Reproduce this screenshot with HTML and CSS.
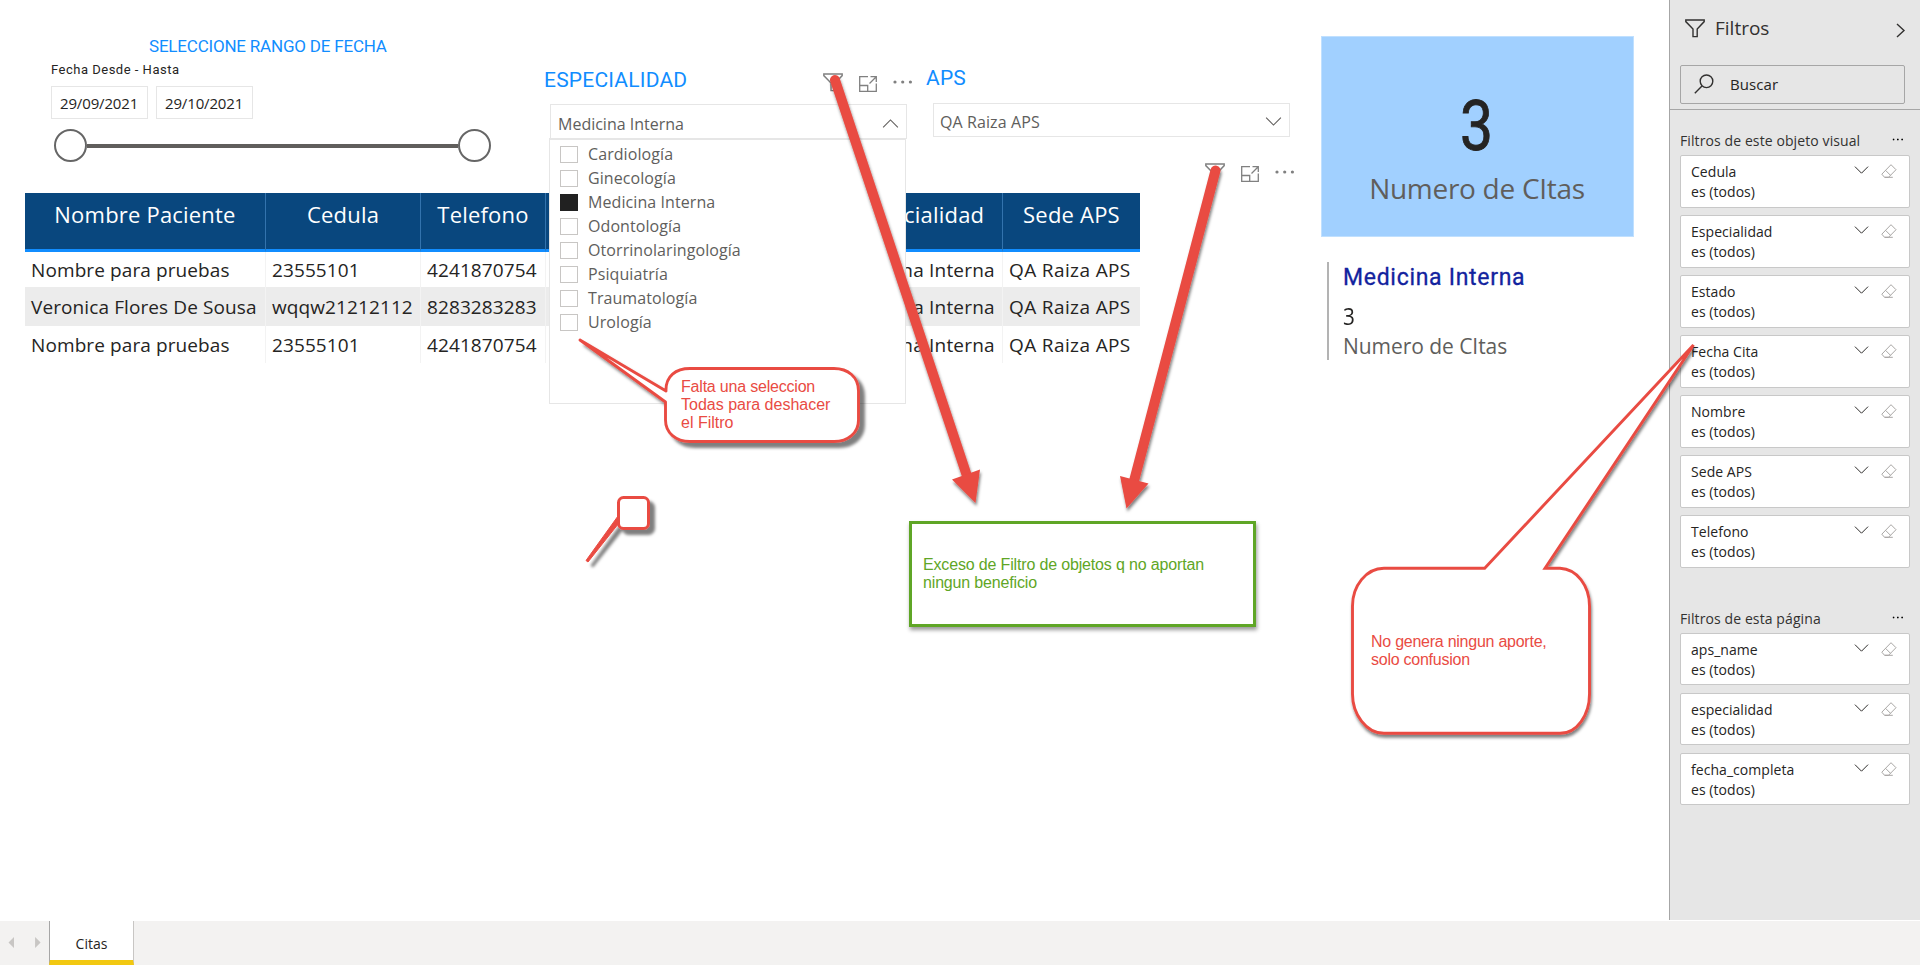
FILE: index.html
```html
<!DOCTYPE html>
<html lang="es">
<head>
<meta charset="utf-8">
<title>Citas</title>
<link rel="stylesheet" href="styles.css">
</head>
<body>
<svg class="defs" width="0" height="0">
  <symbol id="funnel" viewBox="0 0 20 19"><path d="M.8 1h18.4v1.6l-7 7.4v7.6H8V10L.8 2.6z" fill="none" stroke="currentColor" stroke-width="1.4"/></symbol>
  <symbol id="focus" viewBox="0 0 18 16"><path d="M9 .7H.7v14.6h16.6V7.500M.7 9.500h8v5.800M10.500 7.500l6-6M11.500.7h5.800v5.300" fill="none" stroke="currentColor" stroke-width="1.300"/></symbol>
  <symbol id="dots" viewBox="0 0 20 4"><circle cx="2" cy="2" r="1.600"/><circle cx="9.700" cy="2" r="1.600"/><circle cx="17.400" cy="2" r="1.600"/></symbol>
  <symbol id="down" viewBox="0 0 18 10"><path d="M.8.8 9 9 17.200.8" fill="none" stroke="currentColor" stroke-width="1.200"/></symbol>
  <symbol id="eraser" viewBox="0 0 16 14"><path d="M10 .7l5 5-7.500 7.600H3.600L.8 10.200zM4.500 6.300l5 5M3.600 13.300h8.200" fill="none" stroke="currentColor" stroke-width="1"/></symbol>
</svg>
<div class="app">
  <main class="report">
    <section class="left">
      <div class="slicers">
        <div class="date-slicer">
          <h2 class="date-title">SELECCIONE RANGO DE FECHA</h2>
          <div class="date-label">Fecha Desde - Hasta</div>
          <div class="dates"><span class="date"><span>29/09/2021</span></span><span class="date"><span>29/10/2021</span></span></div>
          <div class="range"><i class="knob"></i><i class="track"></i><i class="knob"></i></div>
        </div>
        <div class="slicer esp">
          <div class="slicer-head">
            <h2>ESPECIALIDAD</h2>
            <div class="tools"><svg class="t-funnel"><use href="#funnel"/></svg><svg class="t-focus"><use href="#focus"/></svg><svg class="t-dots"><use href="#dots"/></svg></div>
          </div>
          <div class="select"><span>Medicina Interna</span><svg class="chev up"><use href="#down"/></svg>
            <ul class="menu">
              <li><i></i><span>Cardiología</span></li>
              <li><i></i><span>Ginecología</span></li>
              <li><i class="on"></i><span>Medicina Interna</span></li>
              <li><i></i><span>Odontología</span></li>
              <li><i></i><span>Otorrinolaringología</span></li>
              <li><i></i><span>Psiquiatría</span></li>
              <li><i></i><span>Traumatología</span></li>
              <li><i></i><span>Urología</span></li>
            </ul>
          </div>
        </div>
        <div class="slicer aps">
          <div class="slicer-head"><h2>APS</h2></div>
          <div class="select"><span>QA Raiza APS</span><svg class="chev"><use href="#down"/></svg></div>
          <div class="tools"><svg class="t-funnel"><use href="#funnel"/></svg><svg class="t-focus"><use href="#focus"/></svg><svg class="t-dots"><use href="#dots"/></svg></div>
        </div>
      </div>
      <table class="grid">
        <colgroup><col class="c1"><col class="c2"><col class="c3"><col class="c4"><col class="c5"><col class="c6"></colgroup>
        <thead><tr><th>Nombre Paciente</th><th>Cedula</th><th>Telefono</th><th></th><th>Especialidad</th><th>Sede APS</th></tr></thead>
        <tbody>
          <tr><td>Nombre para pruebas</td><td>23555101</td><td>4241870754</td><td></td><td>Medicina Interna</td><td>QA Raiza APS</td></tr>
          <tr><td>Veronica Flores De Sousa</td><td>wqqw21212112</td><td>8283283283</td><td></td><td>Medicina Interna</td><td>QA Raiza APS</td></tr>
          <tr><td>Nombre para pruebas</td><td>23555101</td><td>4241870754</td><td></td><td>Medicina Interna</td><td>QA Raiza APS</td></tr>
        </tbody>
      </table>
    </section>
    <section class="right">
      <div class="card"><div class="card-value">3</div><div class="card-label">Numero de CItas</div></div>
      <div class="multi"><div class="m-title">Medicina Interna</div><div class="m-value">3</div><div class="m-label">Numero de CItas</div></div>
    </section>
  </main>
  <aside class="filters">
    <header class="f-top">
      <div class="f-title"><svg class="t-funnel"><use href="#funnel"/></svg><span>Filtros</span><svg class="close" viewBox="0 0 9 15"><path d="M1 1l7 6.500L1 14" fill="none" stroke="currentColor" stroke-width="1.400"/></svg></div>
      <div class="search"><svg class="lens" viewBox="0 0 20 20"><circle cx="12.500" cy="7.300" r="6.300" fill="none" stroke="currentColor" stroke-width="1.400"/><path d="M8 12l-7.200 7.200" stroke="currentColor" stroke-width="1.400"/></svg><span>Buscar</span></div>
    </header>
    <section class="group g1">
      <h3><span>Filtros de este objeto visual</span><svg class="g-dots"><use href="#dots"/></svg></h3>
      <div class="f-card"><div><b>Cedula</b><em>es (todos)</em></div><svg class="f-chev"><use href="#down"/></svg><svg class="f-eraser"><use href="#eraser"/></svg></div>
      <div class="f-card"><div><b>Especialidad</b><em>es (todos)</em></div><svg class="f-chev"><use href="#down"/></svg><svg class="f-eraser"><use href="#eraser"/></svg></div>
      <div class="f-card"><div><b>Estado</b><em>es (todos)</em></div><svg class="f-chev"><use href="#down"/></svg><svg class="f-eraser"><use href="#eraser"/></svg></div>
      <div class="f-card"><div><b>Fecha Cita</b><em>es (todos)</em></div><svg class="f-chev"><use href="#down"/></svg><svg class="f-eraser"><use href="#eraser"/></svg></div>
      <div class="f-card"><div><b>Nombre</b><em>es (todos)</em></div><svg class="f-chev"><use href="#down"/></svg><svg class="f-eraser"><use href="#eraser"/></svg></div>
      <div class="f-card"><div><b>Sede APS</b><em>es (todos)</em></div><svg class="f-chev"><use href="#down"/></svg><svg class="f-eraser"><use href="#eraser"/></svg></div>
      <div class="f-card"><div><b>Telefono</b><em>es (todos)</em></div><svg class="f-chev"><use href="#down"/></svg><svg class="f-eraser"><use href="#eraser"/></svg></div>
    </section>
    <section class="group g2">
      <h3><span>Filtros de esta página</span><svg class="g-dots"><use href="#dots"/></svg></h3>
      <div class="f-card"><div><b>aps_name</b><em>es (todos)</em></div><svg class="f-chev"><use href="#down"/></svg><svg class="f-eraser"><use href="#eraser"/></svg></div>
      <div class="f-card"><div><b>especialidad</b><em>es (todos)</em></div><svg class="f-chev"><use href="#down"/></svg><svg class="f-eraser"><use href="#eraser"/></svg></div>
      <div class="f-card"><div><b>fecha_completa</b><em>es (todos)</em></div><svg class="f-chev"><use href="#down"/></svg><svg class="f-eraser"><use href="#eraser"/></svg></div>
    </section>
  </aside>
</div>
<footer class="tabs">
  <svg class="arrows" viewBox="0 0 36 12"><path d="M6 0v12L0 6zM29 0v12l6-6z"/></svg>
  <div class="tab"><span>Citas</span></div>
</footer>

<!-- Review notes drawn over the report -->
<svg class="notes" viewBox="0 0 1920 965">
  <defs>
    <filter id="deep" x="-20%" y="-20%" width="150%" height="150%"><feDropShadow dx="5" dy="5" stdDeviation="1.800" flood-color="#000" flood-opacity=".5"/></filter>
    <filter id="soft" x="-20%" y="-20%" width="150%" height="150%"><feDropShadow dx="1" dy="3" stdDeviation="1.800" flood-color="#000" flood-opacity=".5"/></filter>
  </defs>
  <g class="bubble" filter="url(#deep)">
    <path d="M666 391V391C665.500 376 676 368.500 690 368.500H834C848 368.500 858.500 377 858.500 391V420C858.500 433 848 441.500 834 441.500H690C676 441.500 665.500 433 665.500 420V402L580 340z" stroke-width="2.900" stroke-linejoin="round"/>
  </g>
  <g class="bubble" filter="url(#deep)">
    <path class="solid" d="M618 516L586 560.500L588 562L619 523z"/>
    <rect x="618.500" y="497.500" width="30" height="31" rx="5" stroke-width="3"/>
  </g>
  <g class="arrow" filter="url(#soft)">
    <path class="shaft" d="M835 80L967 476"/><path class="head" d="M952 479.500L980 469.500L975.500 503z"/>
  </g>
  <g class="arrow" filter="url(#soft)">
    <path class="shaft" d="M1215.500 170.500L1134 481"/><path class="head" d="M1120 476L1148.500 483.500L1126.500 508.500z"/>
  </g>
  <g class="bubble" filter="url(#soft)">
    <path d="M1484.700 568.300L1693.500 345L1545 568.300H1560C1577 569 1589.500 586 1589.500 606V694C1589.500 715 1577 733.300 1560 733.300H1384C1366 733.300 1352.500 714 1352.500 694V606C1352.500 586 1366 568.300 1384 568.300z" stroke-width="2.900"/>
  </g>
</svg>
<div class="note n1"><span class="tight">Falta una seleccion</span><br>Todas para deshacer<br>el Filtro</div>
<div class="note n2">Exceso de Filtro de objetos q no aportan<br>ningun beneficio</div>
<div class="note n3">No genera ningun aporte,<br>solo confusion</div>
</body>
</html>
```

FILE: styles.css
```css
* { box-sizing: border-box; }
body { margin: 0; width: 1920px; height: 965px; overflow: hidden; position: relative; background: #fff; color: #252423; font-family: "Open Sans", "Noto Sans", sans-serif; display: flex; flex-direction: column; }
h2, h3, ul { margin: 0; padding: 0; font-weight: 400; }
svg { display: block; flex: none; overflow: visible; }
.defs { position: absolute; }
.app { display: flex; height: 920px; }
.report { display: flex; width: 1669px; }
.left { width: 1320px; padding-left: 25px; }
.slicers { display: flex; height: 193px; }
h2 { font-family: Roboto, sans-serif; color: #118dff; white-space: nowrap; }

.date-slicer { width: 519px; padding: 36px 0 0 26px; }
.date-title { font-size: 17px; line-height: 20px; padding-left: 98px; letter-spacing: -.2px; }
.date-label { font: 13px/20px Roboto, sans-serif; margin-top: 4px; letter-spacing: .5px; }
.dates { display: flex; gap: 8px; margin-top: 6px; }
.date { width: 97px; height: 33px; border: 1px solid #e6e6e6; padding-left: 8px; font-size: 15px; line-height: 33px; letter-spacing: -.15px; }
.range { display: flex; align-items: center; width: 437px; margin: 10px 0 0 3px; }
.knob { width: 33px; height: 33px; border: 2px solid #666; border-radius: 50%; flex: none; }
.track { flex: 1; height: 4px; background: #605e5c; }

.slicer h2 { font-size: 21px; line-height: 24px; letter-spacing: .2px; }
.slicer-head { display: flex; justify-content: space-between; }
.esp { width: 382px; padding-top: 67px; }
.esp h2 { padding-top: 1px; }
.esp .slicer-head { width: 369px; height: 37px; }
.aps { width: 370px; padding-top: 66px; }
.aps .slicer-head { height: 37px; }
.tools { display: flex; gap: 16px; color: #808080; fill: #808080; }
.esp .tools { padding-top: 6px; }
.aps .tools { justify-content: flex-end; padding-right: 1px; }
.t-funnel { width: 20px; height: 19px; }
.t-focus { width: 18px; height: 16px; margin-top: 3px; }
.t-dots { width: 20px; height: 4px; margin-top: 7px; }
.select { position: relative; width: 357px; height: 35px; border: 1px solid #e6e6e6; display: flex; justify-content: space-between; align-items: center; padding: 4px 7px 0 7px; font-size: 16px; color: #605e5c; }
.esp .select { margin-left: 6px; }
.aps .select { margin-left: 7px; height: 34px; margin-bottom: 26px; padding: 3px 7px 0 6px; letter-spacing: .1px; }
.chev { width: 17px; height: 9px; }
.up { transform: scaleY(-1); }
.menu { position: absolute; z-index: 2; left: -2px; top: 33px; width: 357px; height: 266px; background: #fff; border: 1px solid #e6e6e6; border-top-width: 2px; list-style: none; padding: 3px 0 0 10px; }
.menu li { display: flex; align-items: center; gap: 10px; height: 24px; line-height: 23px; padding-bottom: 1px; font-size: 16px; letter-spacing: .08px; }
.menu i { width: 18px; height: 17px; border: 1px solid #c8c6c4; }
.menu i.on { background: #212121; border-color: #212121; }

.grid { table-layout: fixed; width: 1115px; border-collapse: separate; border-spacing: 0; }
.c1 { width: 241px; } .c2 { width: 155px; } .c3 { width: 125px; } .c4 { width: 291px; } .c5 { width: 166px; } .c6 { width: 137px; }
.grid th { height: 59px; padding: 0; vertical-align: top; background: #09477e; color: #fff; font-weight: 400; font-size: 22px; line-height: 43px; letter-spacing: .2px; border-right: 1px solid #3373ad; border-bottom: 3px solid #118dff; white-space: nowrap; }
.grid td { height: 37px; padding: 0 0 0 6px; font-size: 19px; line-height: 34px; letter-spacing: .1px; white-space: nowrap; border-right: 1px solid #f3f3f3; }
.grid td:nth-child(5) { padding-left: 5px; letter-spacing: .2px; }
.grid td:nth-child(6) { letter-spacing: .38px; }
.grid th:last-child, .grid td:last-child { border-right: 0; }
.grid tbody tr:nth-child(1) td { height: 35px; }
.grid tbody tr:nth-child(2) td { height: 39px; background: #ececec; }

.right { padding-top: 36px; }
.card { width: 313px; height: 201px; background: #a1d0ff; border: 1px solid #c0e0ff; text-align: center; padding-top: 49px; margin-left: 1px; }
.card-value { font: 400 70px/80px Roboto, sans-serif; -webkit-text-stroke: .9px #252423; transform: translateX(-1px) scaleX(.84); }
.card-label { font-size: 28px; line-height: 40px; color: #605e5c; margin: 2px 1px 0 0; letter-spacing: -.28px; }
.multi { margin: 25px 0 0 7px; height: 98px; border-left: 2px solid #b3b3b3; padding-left: 14px; }
.m-title { font: 400 23px/32px Roboto, sans-serif; -webkit-text-stroke: .3px #12239e; height: 30px; color: #12239e; letter-spacing: .7px; }
.m-value { font-size: 23px; line-height: 30px; margin-top: 9px; transform: scaleX(.9); transform-origin: left; }
.m-label { font-size: 21px; line-height: 30px; color: #605e5c; letter-spacing: -.05px; }

.filters { width: 251px; background: #e6e6e6; border-left: 1px solid #a6a6a6; }
.f-top { height: 110px; border-bottom: 1px solid #a6a6a6; padding-left: 10px; }
.f-title { display: flex; padding: 14px 15px 0 5px; height: 65px; font-size: 19px; line-height: 28px; color: #323130; }
.f-title .t-funnel { margin: 5px 10px 0 0; }
.close { width: 9px; height: 15px; margin: 9px 0 0 auto; }
.search { display: flex; align-items: center; width: 225px; height: 39px; border: 1px solid #a6a6a6; border-radius: 2px; padding-left: 13px; gap: 16px; font-size: 15px; line-height: 20px; padding-bottom: 2px; letter-spacing: .1px; }
.lens { width: 20px; height: 20px; color: #323130; }
.group { padding-left: 10px; }
.g1 { padding-top: 21px; height: 498px; }
.group h3 { display: flex; justify-content: space-between; font-size: 14px; line-height: 20px; height: 24px; padding-right: 15px; color: #323130; letter-spacing: .1px; }
.g-dots { width: 14px; height: 3px; margin-top: 7px; transform: scale(.8); }
.f-card { width: 230px; height: 53px; margin-bottom: 7px; background: #fff; border: 1px solid #c8c8c8; border-radius: 2px; display: flex; padding: 6px 12px 0 10px; font-size: 14px; line-height: 20px; }
.f-card div { flex: 1; letter-spacing: .05px; }
.f-card b, .f-card em { display: block; font: inherit; }
.f-chev { width: 15px; height: 8px; margin-top: 4px; }
.f-eraser { width: 16px; height: 14px; margin: 2px 0 0 12px; color: #a8a6a4; }
.g2 { padding-top: 1px; }
.g2 .f-card { height: 52px; margin-bottom: 8px; }

.tabs { margin-top: 1px; height: 44px; background: #f3f2f1; display: flex; }
.arrows { width: 36px; height: 11px; margin: 16px 6px 0 7px; fill: #c8c6c4; }
.tab { width: 85px; background: #fff; border-left: 1px solid #a6a6a6; border-right: 1px solid #c8c6c4; border-bottom: 5px solid #f2c811; text-align: center; font-size: 14px; line-height: 46px; }

.notes { position: absolute; left: 0; top: 0; width: 1920px; height: 965px; z-index: 3; }
.bubble path, .bubble rect { fill: #fff; stroke: #e94b43; }
.bubble .solid { fill: #e94b43; stroke-width: 1; }
.shaft { stroke: #e94b43; stroke-width: 10; stroke-linecap: round; }
.head { fill: #e94b43; }
.note { position: absolute; z-index: 4; font: 16px/18px "Liberation Sans", sans-serif; color: #e94b43; white-space: nowrap; }
.n1 { left: 681px; top: 378px; }
.tight { letter-spacing: -.2px; }
.n2 { left: 909px; top: 521px; width: 347px; height: 106px; padding: 32px 11px; color: #5fa626; background: #fff; border: 3px solid #5fa626; box-shadow: 1px 3px 4px rgba(0,0,0,.4); letter-spacing: -.16px; }
.n3 { left: 1371px; top: 633px; letter-spacing: -.25px; }
```
